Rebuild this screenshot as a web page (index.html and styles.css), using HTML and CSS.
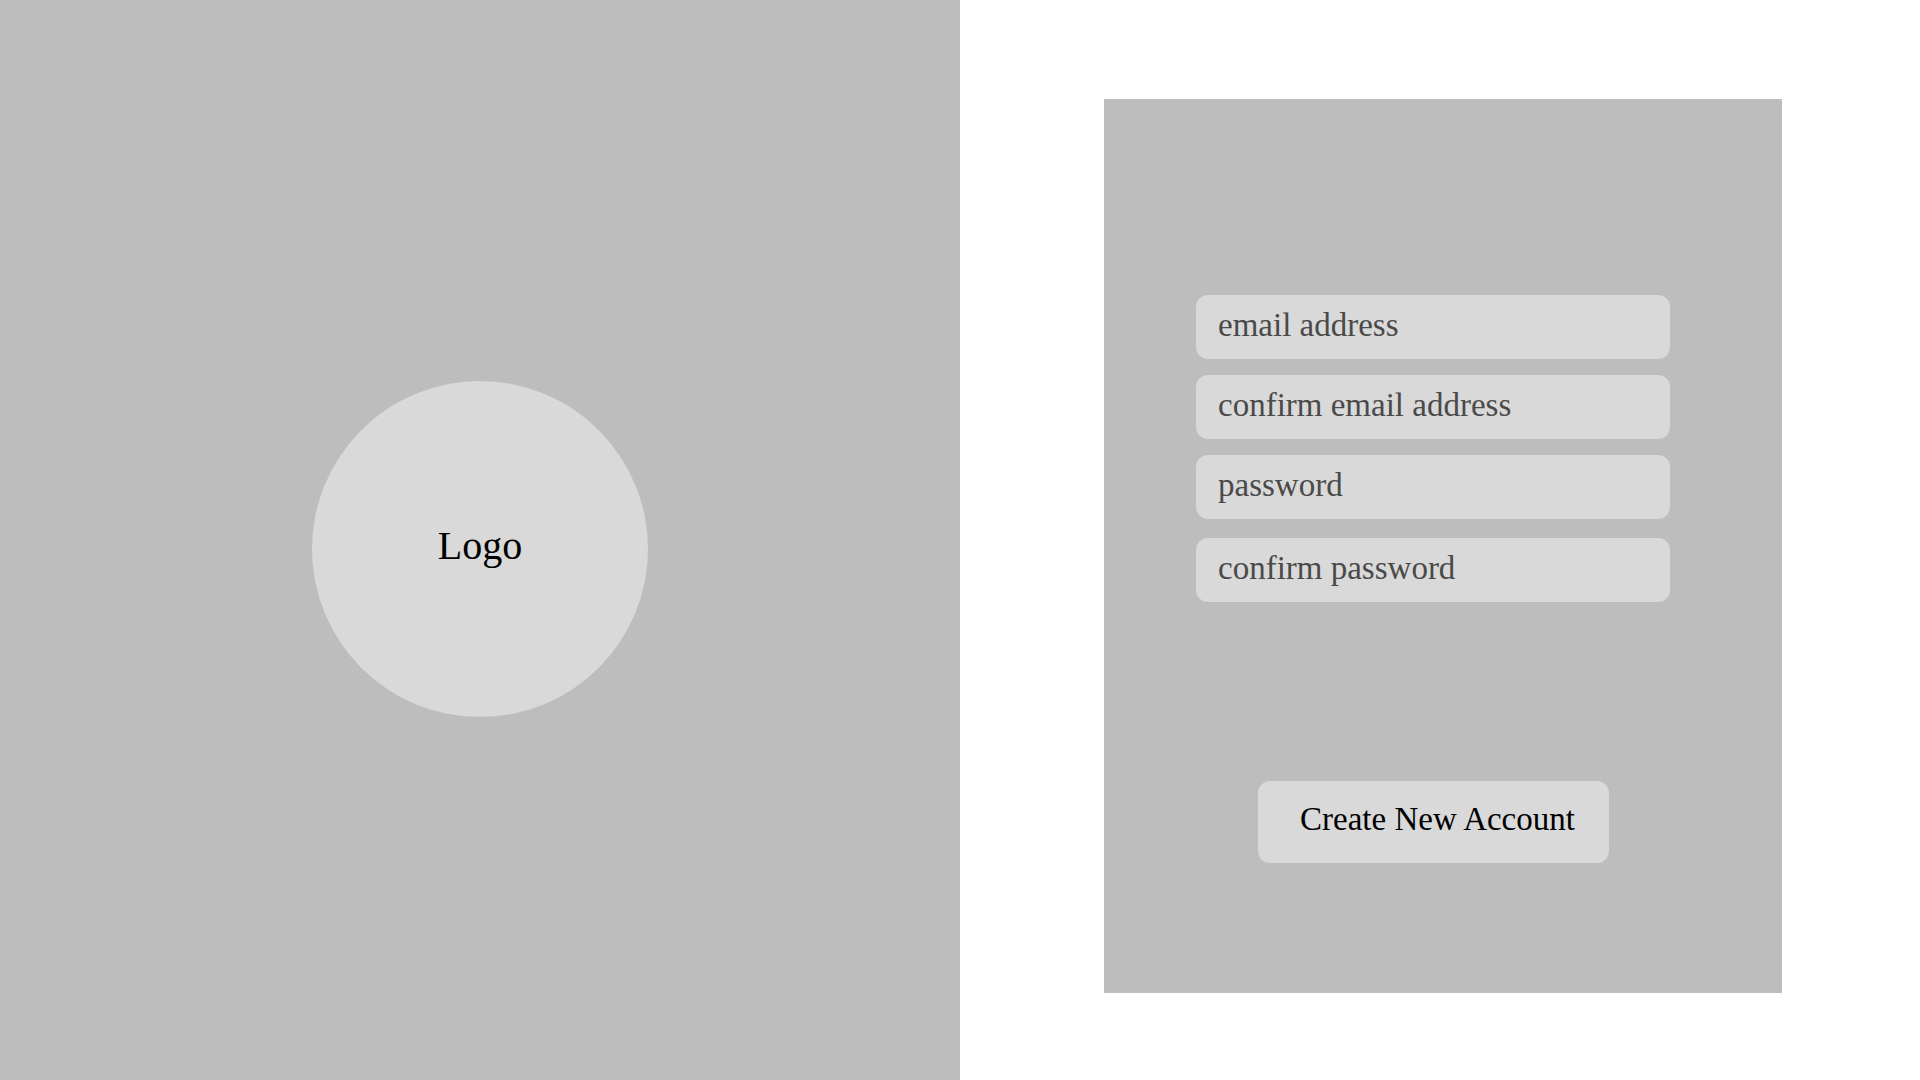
FILE: index.html
```html
<!DOCTYPE html>
<html>
<head>
    <meta charset="UTF-8">
    <meta name="viewport" content="width=device-width, initial-scale=1.0">
    <title>Create Account</title>
    <link rel="stylesheet" href="styles.css">
</head>
<body>
    <div class="brand-side">
        <div class="logo">Logo</div>
    </div>
    <div class="form-side">
        <form class="signup-card">
            <div class="fields">
                <input type="email" class="field" placeholder="email address">
                <input type="email" class="field" placeholder="confirm email address">
                <input type="password" class="field" placeholder="password">
                <input type="password" class="field last" placeholder="confirm password">
            </div>
            <button type="button" class="create-btn">Create New Account</button>
        </form>
    </div>
</body>
</html>
```

FILE: styles.css
```css
* {
    box-sizing: border-box;
}

body {
    margin: 0;
    display: flex;
    height: 100vh;
    background: #fff;
    font-family: "Liberation Serif", "Times New Roman", serif;
}

.brand-side {
    width: 960px;
    height: 100%;
    background: #bdbdbd;
    display: flex;
    align-items: center;
    justify-content: center;
}

.logo {
    width: 336px;
    height: 336px;
    margin-top: 18px;
    border-radius: 50%;
    background: #d9d9d9;
    display: flex;
    align-items: center;
    justify-content: center;
    font-size: 40px;
    color: #000;
    padding-bottom: 8px;
}

.form-side {
    flex: 1;
    padding: 99px 138px 87px 144px;
}

.signup-card {
    height: 100%;
    background: #bdbdbd;
    padding: 196px 0 0 92px;
    display: flex;
    flex-direction: column;
    align-items: flex-start;
}

.fields {
    display: flex;
    flex-direction: column;
    gap: 16px;
}

.field {
    width: 474px;
    height: 64px;
    border: none;
    border-radius: 12px;
    background: #d9d9d9;
    padding: 0 22px 3px;
    font-family: inherit;
    font-size: 33px;
    color: #4a4a4a;
    outline: none;
}

.field::placeholder {
    color: #4a4a4a;
    opacity: 1;
}

.field.last {
    margin-top: 3px;
}

.create-btn {
    margin: 179px 0 0 62px;
    width: 351px;
    height: 82px;
    border: none;
    border-radius: 12px;
    background: #d9d9d9;
    font-family: inherit;
    font-size: 33px;
    color: #000;
    padding: 0 0 6px 8px;
    cursor: pointer;
}
```
